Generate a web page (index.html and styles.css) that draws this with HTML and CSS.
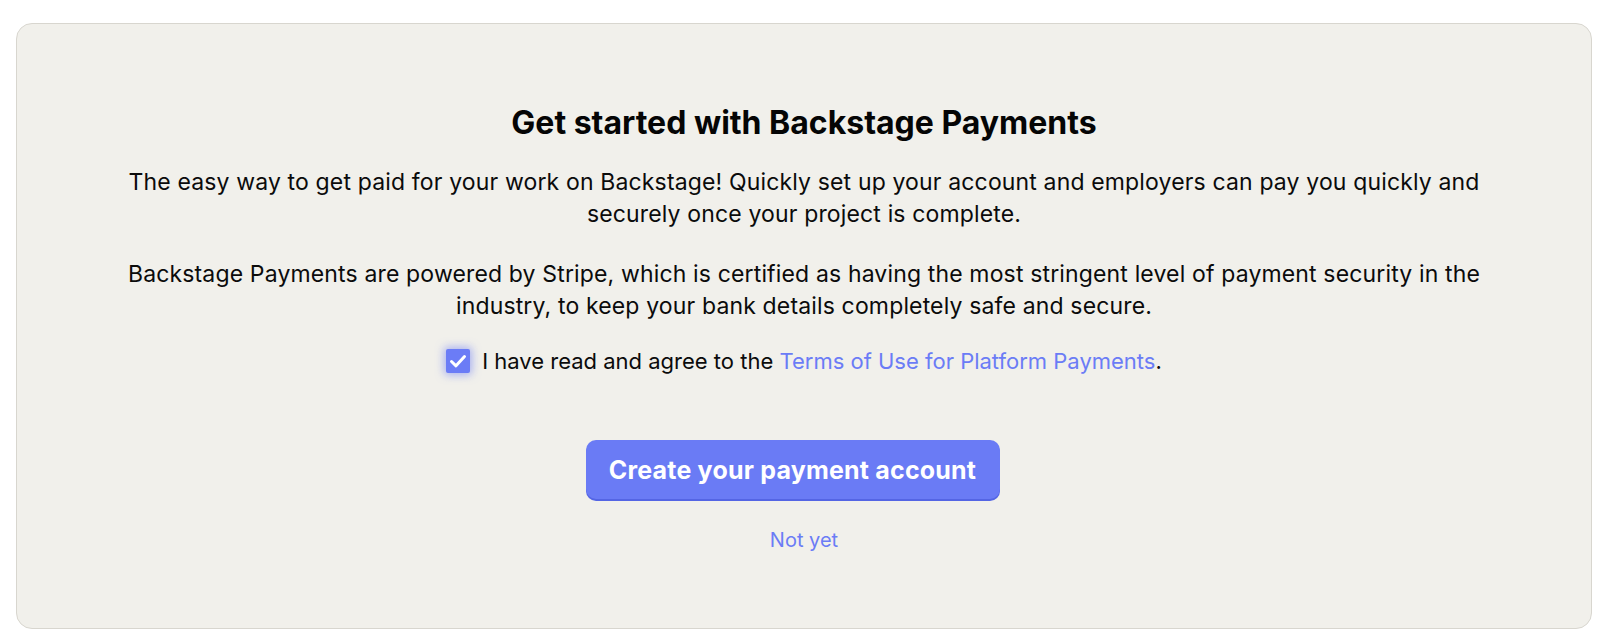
FILE: index.html
```html
<!DOCTYPE html>
<html lang="en">
<head>
    <meta charset="UTF-8">
    <meta name="viewport" content="width=device-width, initial-scale=1.0">
    <title>Backstage Payments</title>
    <link rel="stylesheet" href="styles.css">
</head>
<body>
    <div class="card">
        <div class="content">
            <h1>Get started with Backstage Payments</h1>
            <p>The easy way to get paid for your work on Backstage! Quickly set up your account and employers can pay you quickly and securely once your project is complete.</p>
            <p>Backstage Payments are powered by Stripe, which is certified as having the most stringent level of payment security in the industry, to keep your bank details completely safe and secure.</p>
            <label class="agree">
                <span class="check">
                    <svg width="24" height="24" viewBox="0 0 24 24"><path d="M5.5 12.5 L10 16.8 L18.5 7.5" fill="none" stroke="#fff" stroke-width="3" stroke-linecap="round" stroke-linejoin="round"/></svg>
                </span>
                <span>I have read and agree to the <a href="#">Terms of Use for Platform Payments</a>.</span>
            </label>
            <button class="create">Create your payment account</button>
            <a href="#" class="later">Not yet</a>
        </div>
    </div>
</body>
</html>
```

FILE: styles.css
```css
body {
    font-family: Inter, "Noto Sans", sans-serif;
    background-color: #fff;
    color: #0b0b0b;
    margin: 0;
    padding: 23px 16px 15px 16px;
}
.card {
    background: #f1f0eb;
    border: 1px solid #d8d6cf;
    border-radius: 16px;
    padding: 81px 20px 74px;
}
.content {
    max-width: 1400px;
    margin: 0 auto;
    display: flex;
    flex-direction: column;
    align-items: center;
    text-align: center;
}
h1 {
    font-size: 32px;
    line-height: 36px;
    font-weight: 700;
    margin: 0;
    color: #050505;
}
p {
    font-size: 23px;
    line-height: 32px;
    letter-spacing: 0.15px;
    margin: 25px 0 0;
}
p + p {
    margin-top: 28px;
}
.agree {
    display: flex;
    align-items: center;
    gap: 12px;
    margin-top: 23px;
    font-size: 22px;
    line-height: 32px;
    cursor: pointer;
}
.check {
    width: 24px;
    height: 24px;
    border-radius: 2px;
    background: #6b7cf6;
    box-shadow: 0 0 8px 2px rgba(107, 124, 246, 0.55);
    display: flex;
    align-items: center;
    justify-content: center;
}
a {
    color: #6b7cf6;
    text-decoration: none;
}
.create {
    margin-top: 63px;
    margin-right: 23px;
    width: 414px;
    height: 59px;
    border: none;
    border-radius: 10px;
    background-color: #6a7bf5;
    box-shadow: 0 2px 0 #5465e4;
    color: #fff;
    font-family: inherit;
    font-size: 25px;
    font-weight: 700;
    letter-spacing: 0.2px;
    cursor: pointer;
}
.later {
    margin-top: 27px;
    font-size: 20px;
    line-height: 28px;
}
```
